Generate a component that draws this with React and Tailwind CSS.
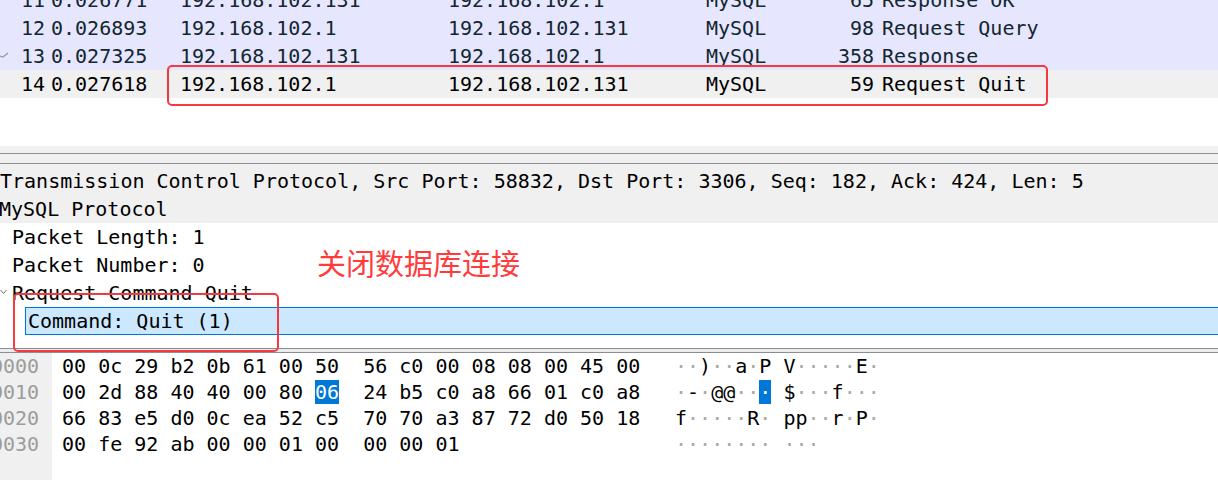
const packets = [
  { no: 11, time: "0.026771", src: "192.168.102.131", dst: "192.168.102.1", proto: "MySQL", len: 65, info: "Response OK" },
  { no: 12, time: "0.026893", src: "192.168.102.1", dst: "192.168.102.131", proto: "MySQL", len: 98, info: "Request Query" },
  { no: 13, time: "0.027325", src: "192.168.102.131", dst: "192.168.102.1", proto: "MySQL", len: 358, info: "Response", related: true },
  { no: 14, time: "0.027618", src: "192.168.102.1", dst: "192.168.102.131", proto: "MySQL", len: 59, info: "Request Quit", selected: true },
];

const hexRows = [
  { off: "0000", bytes: "00 0c 29 b2 0b 61 00 50 56 c0 00 08 08 00 45 00" },
  { off: "0010", bytes: "00 2d 88 40 40 00 80 06 24 b5 c0 a8 66 01 c0 a8", mark: 7 },
  { off: "0020", bytes: "66 83 e5 d0 0c ea 52 c5 70 70 a3 87 72 d0 50 18" },
  { off: "0030", bytes: "00 fe 92 ab 00 00 01 00 00 00 01" },
];

function PacketRow({ p }) {
  const tone = p.selected ? "bg-[#f0f0f0] text-black" : "bg-[#e7e6ff] text-[#12272e]";
  return (
    <div className={`relative grid h-[28px] grid-cols-[45px_135px_268px_258px_120px_48px_1fr] items-center leading-[28px] whitespace-pre ${tone}`}>
      {p.related && (
        <svg className="absolute left-0 top-[8px]" width="9" height="8" viewBox="0 0 9 8">
          <polyline points="0,6 3,7 8,3" fill="none" stroke="#9a9a9a" strokeWidth="1.2" />
        </svg>
      )}
      <span className="text-right">{p.no}</span>
      <span className="pl-[6px]">{p.time}</span>
      <span>{p.src}</span>
      <span>{p.dst}</span>
      <span>{p.proto}</span>
      <span className="text-right">{p.len}</span>
      <span className="pl-[8px]">{p.info}</span>
    </div>
  );
}

function asciiOf(b) {
  const n = parseInt(b, 16);
  return n >= 0x20 && n < 0x7f ? String.fromCharCode(n) : "·";
}

function HexRow({ row }) {
  const bytes = row.bytes.split(" ");
  return (
    <div className="flex h-[26px] items-center leading-[26px] whitespace-pre">
      <div className="w-[623px] shrink-0 pl-[10px]">
        {bytes.map((b, i) => (
          <span key={i}>
            <span className={i === row.mark ? "bg-[#0078d7] text-white" : ""}>{b}</span>
            {i === 7 ? "  " : i < bytes.length - 1 ? " " : ""}
          </span>
        ))}
      </div>
      <div>
        {bytes.map((b, i) => {
          const c = asciiOf(b);
          const cls = i === row.mark ? "bg-[#0078d7] text-white" : c === "·" ? "text-[#a8a8a8]" : "text-black";
          return (
            <span key={i}>
              <span className={cls}>{c}</span>
              {i === 7 ? " " : ""}
            </span>
          );
        })}
      </div>
    </div>
  );
}

export default function App() {
  return (
    <div className="relative h-[480px] w-full overflow-hidden bg-white font-['DejaVu_Sans_Mono',monospace] text-[20px] text-black">
      {/* packet list */}
      <div className="-mt-[14px] h-[160px]">
        {packets.map((p) => (
          <PacketRow key={p.no} p={p} />
        ))}
      </div>

      {/* splitter */}
      <div className="flex h-[21px] flex-col bg-[#f0f0f0]">
        <div className="mt-[7px] h-px bg-[#8c8c96]" />
        <div className="mt-[9px] h-px bg-[#8c8c96]" />
      </div>

      {/* details tree */}
      <div className="leading-[28px] whitespace-pre">
        <div className="bg-[#f0f0f0]">
          <div className="h-[28px]">Transmission Control Protocol, Src Port: 58832, Dst Port: 3306, Seq: 182, Ack: 424, Len: 5</div>
          <div className="-ml-px h-[28px]">MySQL Protocol</div>
        </div>
        <div className="h-[28px] pl-[12px]">Packet Length: 1</div>
        <div className="h-[28px] pl-[12px]">Packet Number: 0</div>
        <div className="relative h-[28px] pl-[12px]">
          <svg className="absolute left-0 top-[10px]" width="8" height="6" viewBox="0 0 8 6">
            <polyline points="0.5,1 3.5,4.5 6.5,1" fill="none" stroke="#707070" strokeWidth="1" />
          </svg>
          Request Command Quit
        </div>
        <div className="-mr-[4px] ml-[25px] h-[28px] border border-[#0078d7] bg-[#cce8ff] pl-[2px] leading-[26px]">Command: Quit (1)</div>
      </div>

      {/* splitter */}
      <div className="mt-[13px] flex h-[5px] flex-col bg-[#ececec]">
        <div className="h-px bg-[#8c8c96]" />
        <div className="mt-[3px] h-px bg-[#8c8c96]" />
      </div>

      {/* bytes pane */}
      <div className="flex h-[200px]">
        <div className="w-[52px] shrink-0 overflow-hidden bg-[#f0f0f0] text-[#9c9c9c]">
          {hexRows.map((r) => (
            <div key={r.off} className="-ml-[9px] h-[26px] leading-[26px]">{r.off}</div>
          ))}
        </div>
        <div>
          {hexRows.map((r) => (
            <HexRow key={r.off} row={r} />
          ))}
        </div>
      </div>

      {/* annotations */}
      <div className="absolute left-[167px] top-[65px] h-[41px] w-[881px] rounded-[5px] border-2 border-[#f5393f]" />
      <div className="absolute left-[13px] top-[293px] h-[59px] w-[266px] rounded-[5px] border-2 border-[#f5393f]" />
      <div className="absolute left-[317px] top-[245px] font-['Noto_Sans_CJK_SC',sans-serif] text-[29px] leading-[35px] text-[#ff3b3b]">关闭数据库连接</div>
    </div>
  );
}
